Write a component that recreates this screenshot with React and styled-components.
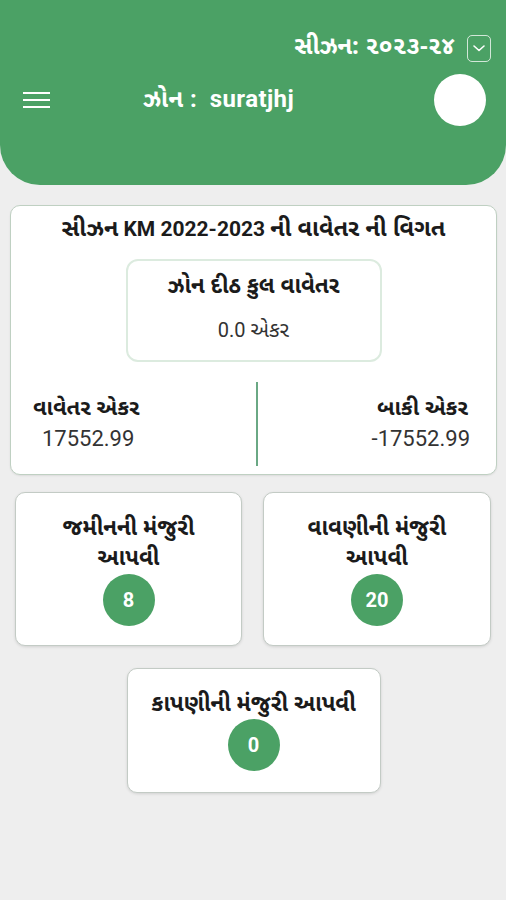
import React from "react";
import styled, { createGlobalStyle } from "styled-components";

const GREEN = "#4ba165";

const Global = createGlobalStyle`
  html, body { margin: 0; padding: 0; background: #eeeeee; }
  body { font-family: Roboto, "Noto Sans Gujarati", "Noto Sans", sans-serif; color: #222; }
  * { box-sizing: border-box; }
`;

const Gu = styled.span`
  font-family: "Noto Sans Gujarati", "Noto Sans", sans-serif;
  font-size: ${(p) => p.$s}px;
`;

const Page = styled.div`
  width: 506px;
  min-height: 900px;
  background: #eeeeee;
`;

const Header = styled.header`
  height: 185px;
  background: ${GREEN};
  border-radius: 0 0 40px 40px;
  padding: 34px 15px 0 23px;
  color: #fff;
`;

const SeasonRow = styled.div`
  display: flex;
  justify-content: flex-end;
  align-items: center;
  gap: 12px;
  height: 28px;
`;

const SeasonText = styled.span`
  font-size: 24px;
  font-weight: 700;
  line-height: 28px;
  font-family: "Noto Sans Gujarati", Roboto, sans-serif;
`;

const DropBox = styled.span`
  width: 24px;
  height: 27px;
  border: 1.5px solid rgba(255, 255, 255, 0.75);
  border-radius: 5px;
  display: flex;
  align-items: center;
  justify-content: center;
`;

const MainRow = styled.div`
  display: flex;
  align-items: center;
  height: 52px;
  margin-top: 12px;
`;

const Burger = styled.span`
  width: 27px;
  display: flex;
  flex-direction: column;
  gap: 4.5px;
  span {
    height: 2.5px;
    background: #fff;
    display: block;
  }
`;

const ZoneText = styled.div`
  margin-left: 93px;
  font-size: 24px;
  font-weight: 700;
  letter-spacing: 0.4px;
  flex: 1;
  line-height: 30px;
`;

const Avatar = styled.span`
  width: 52px;
  height: 52px;
  border-radius: 50%;
  background: #fff;
  margin-right: 5px;
`;

const Content = styled.main`
  padding: 20px 9px 0 10px;
  display: flex;
  flex-direction: column;
  align-items: center;
`;

const Card = styled.section`
  background: #fff;
  border: 1px solid #bfd0c2;
  border-radius: 10px;
  box-shadow: 0 1px 2px rgba(0, 0, 0, 0.08);
`;

const SummaryCard = styled(Card)`
  width: 487px;
  height: 270px;
  padding: 8px 0 0;
  display: flex;
  flex-direction: column;
  align-items: center;
`;

const Title = styled.h2`
  margin: 0;
  font-family: Roboto, "Noto Sans Gujarati", sans-serif;
  font-size: 21px;
  font-weight: 700;
  line-height: 30px;
  color: #1b1b1b;
  white-space: nowrap;
`;

const ZoneBox = styled.div`
  margin-top: 13px;
  width: 256px;
  height: 103px;
  border: 2px solid #dcebdf;
  border-radius: 12px;
  display: flex;
  flex-direction: column;
  align-items: center;
  padding-top: 12px;
  gap: 12px;
`;

const BoxLabel = styled.div`
  font-weight: 700;
  line-height: 30px;
  color: #1b1b1b;
`;

const BoxValue = styled.div`
  font-size: 20px;
  line-height: 30px;
  color: #333;
`;

const Split = styled.div`
  margin-top: 20px;
  width: 100%;
  display: grid;
  grid-template-columns: 245px 2px 1fr;
  height: 84px;
`;

const Side = styled.div`
  display: flex;
  flex-direction: column;
  align-items: ${(p) => (p.$right ? "flex-end" : "flex-start")};
  padding: ${(p) => (p.$right ? "13px 26px 0 0" : "13px 0 0 22px")};
`;

const SideLabel = styled.div`
  font-weight: 700;
  line-height: 30px;
  color: #1b1b1b;
  margin-right: ${(p) => (p.$right ? "2px" : "0")};
`;

const SideValue = styled.div`
  font-size: 22px;
  line-height: 28px;
  color: #333;
  padding: ${(p) => (p.$right ? "0" : "0 0 0 9px")};
`;

const Divider = styled.div`
  background: #6aa884;
  width: 2px;
`;

const Grid = styled.div`
  margin-top: 17px;
  display: grid;
  grid-template-columns: 227px 228px;
  column-gap: 21px;
  margin-left: 15px;
`;

const TaskCard = styled(Card)`
  width: ${(p) => p.$w}px;
  height: ${(p) => p.$h}px;
  display: flex;
  flex-direction: column;
  align-items: center;
  padding-top: 22px;
  border-color: #c3cbc5;
  box-shadow: 0 1px 3px rgba(0, 0, 0, 0.12);
`;

const TaskLabel = styled.div`
  font-family: "Noto Sans Gujarati", sans-serif;
  font-size: 22.5px;
  font-weight: 700;
  line-height: 30px;
  text-align: center;
  color: #1b1b1b;
`;

const Badge = styled.div`
  margin-top: ${(p) => p.$mt}px;
  width: 52px;
  height: 52px;
  border-radius: 50%;
  background: ${GREEN};
  color: #fff;
  font-weight: 700;
  font-size: 20px;
  display: flex;
  align-items: center;
  justify-content: center;
`;

const BottomRow = styled.div`
  margin-top: 22px;
  display: flex;
  justify-content: center;
  padding-left: 1px;
`;

export default function App() {
  return (
    <Page>
      <Global />
      <Header>
        <SeasonRow>
          <SeasonText>સીઝન: ૨૦૨૩-૨૪</SeasonText>
          <DropBox>
            <svg width="14" height="10" viewBox="0 0 14 10" fill="none">
              <path d="M2 3l5 4.5L12 3" stroke="#fff" strokeWidth="1.6" strokeLinecap="round" strokeLinejoin="round" />
            </svg>
          </DropBox>
        </SeasonRow>
        <MainRow>
          <Burger>
            <span />
            <span />
            <span />
          </Burger>
          <ZoneText>
            <Gu $s={24}>ઝોન</Gu> :&nbsp; suratjhj
          </ZoneText>
          <Avatar />
        </MainRow>
      </Header>
      <Content>
        <SummaryCard>
          <Title>
            <Gu $s={23.5}>સીઝન</Gu> KM 2022-2023 <Gu $s={23.5}>ની વાવેતર ની વિગત</Gu>
          </Title>
          <ZoneBox>
            <BoxLabel>
              <Gu $s={22.5}>ઝોન દીઠ કુલ વાવેતર</Gu>
            </BoxLabel>
            <BoxValue>
              0.0 <Gu $s={21}>એકર</Gu>
            </BoxValue>
          </ZoneBox>
          <Split>
            <Side>
              <SideLabel>
                <Gu $s={22}>વાવેતર એકર</Gu>
              </SideLabel>
              <SideValue>17552.99</SideValue>
            </Side>
            <Divider />
            <Side $right>
              <SideLabel $right>
                <Gu $s={22}>બાકી એકર</Gu>
              </SideLabel>
              <SideValue $right>-17552.99</SideValue>
            </Side>
          </Split>
        </SummaryCard>
      </Content>
      <Grid>
        <TaskCard as="div" $w={227} $h={154}>
          <TaskLabel>
            જમીનની મંજુરી
            <br />
            આપવી
          </TaskLabel>
          <Badge $mt={-1}>8</Badge>
        </TaskCard>
        <TaskCard as="div" $w={228} $h={154}>
          <TaskLabel>
            વાવણીની મંજુરી
            <br />
            આપવી
          </TaskLabel>
          <Badge $mt={-1}>20</Badge>
        </TaskCard>
      </Grid>
      <BottomRow>
        <TaskCard as="div" $w={254} $h={125}>
          <TaskLabel>કાપણીની મંજુરી આપવી</TaskLabel>
          <Badge $mt={-2}>0</Badge>
        </TaskCard>
      </BottomRow>
    </Page>
  );
}
